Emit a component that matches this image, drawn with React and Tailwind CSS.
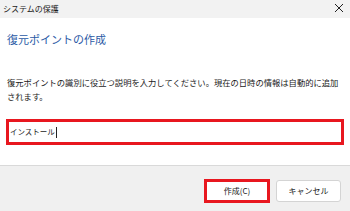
import React from 'react';

export default function App() {
  return (
    <div
      className="w-[350px] h-[211px] flex flex-col bg-white overflow-hidden text-[#1a1a1a]"
      style={{ fontFamily: '"Noto Sans CJK JP", "Noto Sans", sans-serif' }}
    >
      <div className="h-[18px] bg-[#f2f2f2] flex items-center justify-between pl-[3px] pr-[6px]">
        <span className="text-[8px] leading-none">システムの保護</span>
        <svg width="10" height="10" viewBox="0 0 10 10" className="mt-[-2px]">
          <path d="M1 1 L9 9 M9 1 L1 9" stroke="#222" strokeWidth="1" />
        </svg>
      </div>

      <div className="flex-1 flex flex-col px-[6px]">
        <h1 className="mt-[14px] ml-[1px] text-[11px] leading-[14px] text-[#2b5aa6]">
          復元ポイントの作成
        </h1>
        <p className="mt-[29px] ml-[1px] text-[8.3px] leading-[14px]">
          復元ポイントの識別に役立つ説明を入力してください。現在の日時の情報は自動的に追加
          されます。
        </p>
        <div className="mt-[16px] h-[26px] border-[3px] border-[#e8171f] flex items-center px-[1px]">
          <span className="text-[7.5px] leading-none">インストール</span>
          <span className="w-px h-[11px] bg-[#222] ml-[1px]" />
        </div>
      </div>

      <div className="h-[46px] border-t border-[#d9d9d9] bg-[#f0f0f0] flex items-start justify-end gap-[6px] pt-[13px] pr-[9px]">
        <button className="w-[66px] h-[24px] border-[3px] border-[#e8171f] bg-white text-[8px] flex items-center justify-center">
          作成(C)
        </button>
        <button className="mt-[1px] w-[65px] h-[22px] border border-[#d4d4d4] rounded-[3px] bg-white text-[8px] flex items-center justify-center">
          キャンセル
        </button>
      </div>
    </div>
  );
}
